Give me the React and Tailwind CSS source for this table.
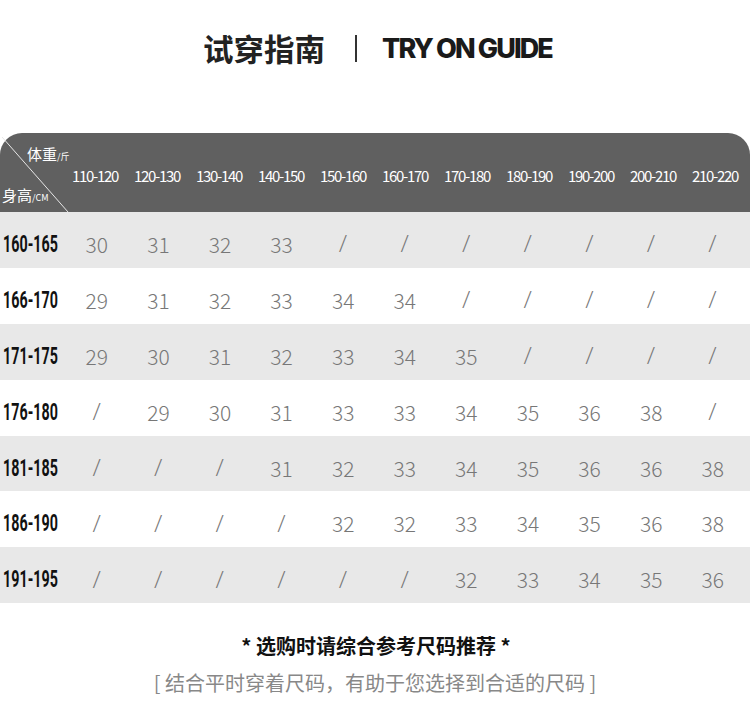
import React from "react";

const cols = ["110-120","120-130","130-140","140-150","150-160","160-170","170-180","180-190","190-200","200-210","210-220"];
const rows = [
  ["160-165", ["30","31","32","33","/","/","/","/","/","/","/"]],
  ["166-170", ["29","31","32","33","34","34","/","/","/","/","/"]],
  ["171-175", ["29","30","31","32","33","34","35","/","/","/","/"]],
  ["176-180", ["/","29","30","31","33","33","34","35","36","38","/"]],
  ["181-185", ["/","/","/","31","32","33","34","35","36","36","38"]],
  ["186-190", ["/","/","/","/","32","32","33","34","35","36","38"]],
  ["191-195", ["/","/","/","/","/","/","32","33","34","35","36"]],
];

const cjk = { fontFamily: '"Noto Sans CJK SC", "Noto Sans", sans-serif' };

export default function App() {
  return (
    <div className="w-[750px] h-[727px] bg-white overflow-hidden" style={cjk}>
      <div className="flex items-center justify-center h-[96px] pl-[5px]">
        <span className="text-[30.5px] font-bold text-[#222] leading-none">试穿指南</span>
        <span className="w-[2px] h-[27px] bg-[#333] ml-[30px] mr-[25px]"></span>
        <span className="text-[27px] font-extrabold text-[#1a1a1a] tracking-[-1.9px] leading-none" style={{ fontFamily: 'Inter, "Liberation Sans", sans-serif' }}>TRY ON GUIDE</span>
      </div>
      <div className="mt-[37px]">
        <div className="grid grid-cols-[64px_repeat(11,62px)] h-[79px] bg-[#606060] rounded-t-[22px] text-white items-center">
          <div className="relative h-full">
            <svg className="absolute left-0 top-0" width="70" height="79" viewBox="0 0 70 79">
              <line x1="2" y1="4" x2="68" y2="79" stroke="#e6e6e6" strokeWidth="1" />
            </svg>
            <span className="absolute left-[27px] top-[13px] text-[15px] leading-none whitespace-nowrap">体重<span className="text-[9px]">/斤</span></span>
            <span className="absolute left-[2px] top-[54px] text-[15px] leading-none whitespace-nowrap">身高<span className="text-[9px]">/CM</span></span>
          </div>
          {cols.map((c) => (
            <div key={c} className="text-center text-[15px] tracking-[-1.3px] pt-[8px] text-white">{c}</div>
          ))}
        </div>
        {rows.map(([label, vals], i) => (
          <div key={label} className={`grid grid-cols-[66px_repeat(11,61.6px)] h-[55.9px] items-center pt-[9px] ${i % 2 === 0 ? "bg-[#e8e8e8]" : "bg-white"}`}>
            <div className="pl-[5px] text-[23px] font-bold text-[#111] origin-left scale-x-[0.62] whitespace-nowrap leading-none" style={{ fontFamily: 'Roboto, "Liberation Sans", sans-serif' }}>{label}</div>
            {vals.map((v, j) =>
              v === "/" ? (
                <div key={j} className="text-center text-[22px] text-[#777] font-light leading-none" style={{ fontFamily: 'Roboto, sans-serif' }}>/</div>
              ) : (
                <div key={j} className="text-center text-[21px] text-[#777] font-light leading-none">{v}</div>
              )
            )}
          </div>
        ))}
      </div>
      <div className="text-center mt-[33px] text-[20px] font-bold text-[#111] leading-none pl-[2px]">* 选购时请综合参考尺码推荐 *</div>
      <div className="text-center mt-[17px] text-[20px] text-[#888] leading-none">[ 结合平时穿着尺码，有助于您选择到合适的尺码 ]</div>
    </div>
  );
}
